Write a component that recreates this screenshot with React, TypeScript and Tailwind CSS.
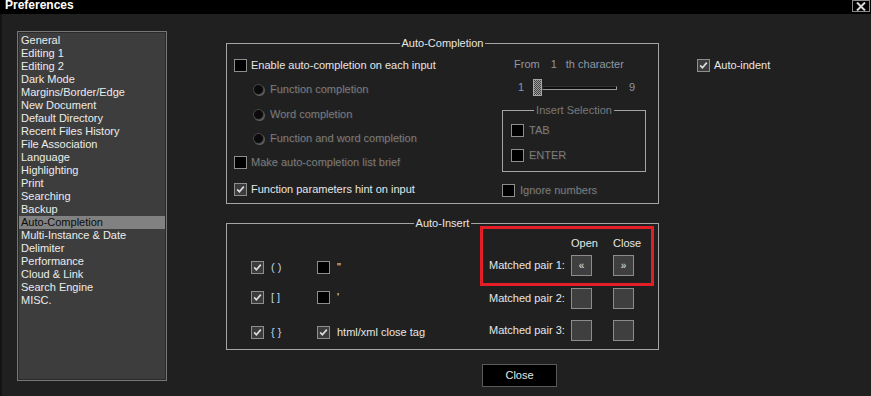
import React from "react";

const lists = [
  "General",
  "Editing 1",
  "Editing 2",
  "Dark Mode",
  "Margins/Border/Edge",
  "New Document",
  "Default Directory",
  "Recent Files History",
  "File Association",
  "Language",
  "Highlighting",
  "Print",
  "Searching",
  "Backup",
  "Auto-Completion",
  "Multi-Instance & Date",
  "Delimiter",
  "Performance",
  "Cloud & Link",
  "Search Engine",
  "MISC.",
];

function Check({ checked = false }: { checked?: boolean }) {
  return (
    <div
      className={`h-[13px] w-[13px] shrink-0 border border-[#8e8e8e] ${
        checked ? "bg-[#3c3c3c]" : "bg-black"
      } flex items-center justify-center`}
    >
      {checked && (
        <svg width="9" height="9" viewBox="0 0 9 9">
          <polyline
            points="1.2,4.4 3.4,6.8 7.8,1.6"
            fill="none"
            stroke="#dcdcdc"
            strokeWidth="1.7"
          />
        </svg>
      )}
    </div>
  );
}

function Radio() {
  return (
    <div className="h-[11px] w-[11px] shrink-0 rounded-full border border-[#4a4a4a] bg-[#0b0b0b] shadow-[1px_1px_0_#5c5c5c]" />
  );
}

function Group({
  title,
  dim = false,
  className,
  children,
}: {
  title: string;
  dim?: boolean;
  className: string;
  children: React.ReactNode;
}) {
  return (
    <div className={`relative border border-[#a4a4a4] ${className}`}>
      <span
        className={`absolute left-1/2 top-[-7px] -translate-x-1/2 whitespace-nowrap bg-[#202020] px-[2px] leading-[13px] ${
          dim ? "text-[#7a7a7a]" : "text-[#e6e6e6]"
        }`}
      >
        {title}
      </span>
      {children}
    </div>
  );
}

const dimText = "text-[#7c7c7c] [text-shadow:1px_1px_0_#2e2e2e]";

function PairButton({ label }: { label?: string }) {
  return (
    <div className="flex h-[21px] w-[21px] items-center justify-center border border-[#8c8c8c] bg-[#3f3f3f] text-[10px] leading-none text-[#e6e6e6]">
      {label}
    </div>
  );
}

export default function App() {
  return (
    <div className="h-[396px] w-[871px] overflow-hidden bg-[#202020] font-['Liberation_Sans',Arial,sans-serif] text-[11px] text-[#e6e6e6]">
      {/* title bar */}
      <div className="flex h-[14px] items-start justify-between bg-black">
        <span className="ml-[5px] mt-[-1px] text-[12px] font-bold leading-[12px] text-white">
          Preferences
        </span>
        <div className="mr-[1px] flex h-[12px] w-[18px] items-center justify-center border border-[#8a8a8a]">
          <svg width="10" height="9" viewBox="0 0 10 9">
            <path d="M1 0.5 L9 8.5 M9 0.5 L1 8.5" stroke="#d8d8d8" strokeWidth="2" />
          </svg>
        </div>
      </div>

      <div className="flex h-[382px] border-l-2 border-[#141414]">
        {/* category list */}
        <div className="ml-[15px] mt-[17px] h-[350px] w-[150px] shrink-0 border border-[#767676] bg-[#2a2a2a] p-[1px]">
          <div className="h-full bg-[#3d3d3d] pt-[1px]">
            {lists.map((item) => (
              <div
                key={item}
                className={`h-[13px] whitespace-nowrap pl-[2px] leading-[13px] ${
                  item === "Auto-Completion" ? "bg-[#818181] text-[#0c0c0c]" : "text-[#ececec]"
                }`}
              >
                {item}
              </div>
            ))}
          </div>
        </div>

        {/* settings */}
        <div className="ml-[59px] mt-[29px] flex shrink-0 flex-col">
          <Group title="Auto-Completion" className="flex h-[161px] w-[433px] pl-[7px]">
            <div className="flex w-[268px] shrink-0 flex-col pt-[15px]">
              <div className="flex h-[13px] items-center gap-[4px]">
                <Check />
                <span>Enable auto-completion on each input</span>
              </div>
              <div className={`ml-[19px] mt-[12px] flex h-[11px] items-center gap-[6px] ${dimText}`}>
                <Radio />
                <span>Function completion</span>
              </div>
              <div className={`ml-[19px] mt-[14px] flex h-[11px] items-center gap-[6px] ${dimText}`}>
                <Radio />
                <span>Word completion</span>
              </div>
              <div className={`ml-[19px] mt-[13px] flex h-[11px] items-center gap-[6px] ${dimText}`}>
                <Radio />
                <span>Function and word completion</span>
              </div>
              <div className="mt-[12px] flex h-[13px] items-center gap-[4px]">
                <Check />
                <span className={dimText}>Make auto-completion list brief</span>
              </div>
              <div className="mt-[14px] flex h-[13px] items-center gap-[4px]">
                <Check checked />
                <span>Function parameters hint on input</span>
              </div>
            </div>

            <div className="flex flex-col pt-[14px]">
              <div className="ml-[12px] flex h-[13px] items-center text-[#8e97a6]">
                <span>From</span>
                <span className="ml-[11px]">1</span>
                <span className="ml-[9px]">th character</span>
              </div>
              <div className="mt-[8px] flex h-[17px] items-center text-[#8e97a6]">
                <span className="ml-[16px] w-[15px]">1</span>
                <div className="h-[17px] w-[9px] border border-[#a8a8a8] bg-[repeating-conic-gradient(#a0a0a0_0_25%,#404040_0_50%)] bg-[length:2px_2px]" />
                <div className="h-[4px] w-[75px] border border-[#9a9a9a] border-l-[#333] border-t-[#333] bg-[#0e0e0e]" />
                <span className="ml-[12px]">9</span>
              </div>
              <Group title="Insert Selection" dim className="mt-[14px] h-[62px] w-[144px] pl-[8px] pt-[13px]">
                <div className="flex h-[13px] items-center gap-[5px]">
                  <Check />
                  <span className={dimText}>TAB</span>
                </div>
                <div className="mt-[12px] flex h-[13px] items-center gap-[5px]">
                  <Check />
                  <span className={dimText}>ENTER</span>
                </div>
              </Group>
              <div className="mt-[12px] flex h-[13px] items-center gap-[5px]">
                <Check />
                <span className={dimText}>Ignore numbers</span>
              </div>
            </div>
          </Group>

          <Group title="Auto-Insert" className="mt-[19px] flex h-[127px] w-[433px]">
            <div className="flex w-[262px] shrink-0 flex-col pl-[24px] pt-[37px]">
              {[
                ["( )", '"', false],
                ["[ ]", "'", false],
                ["{ }", "html/xml close tag", true],
              ].map(([a, b, c], i) => (
                <div
                  key={i}
                  className={`flex h-[13px] items-center ${i === 1 ? "mt-[17px]" : i === 2 ? "mt-[22px]" : ""}`}
                >
                  <div className="flex w-[66px] shrink-0 items-center gap-[7px]">
                    <Check checked />
                    <span className="text-[#b9d6f0]">{a as string}</span>
                  </div>
                  <div className="flex items-center gap-[7px] whitespace-nowrap">
                    <Check checked={c as boolean} />
                    <span>{b as string}</span>
                  </div>
                </div>
              ))}
            </div>

            <div className="relative flex flex-col pt-[13px]">
              <div className="flex h-[13px] items-center leading-[13px]">
                <span className="w-[82px]" />
                <span className="w-[21px] text-center">Open</span>
                <span className="ml-[21px] w-[21px] text-center">Close</span>
              </div>
              {["1", "2", "3"].map((n, i) => (
                <div
                  key={n}
                  className={`flex items-center ${i === 0 ? "mt-[5px]" : i === 1 ? "mt-[12px]" : "mt-[11px]"}`}
                >
                  <span className="w-[82px] whitespace-nowrap">Matched pair {n}:</span>
                  <PairButton label={i === 0 ? "«" : undefined} />
                  <div className="ml-[21px]">
                    <PairButton label={i === 0 ? "»" : undefined} />
                  </div>
                </div>
              ))}
              {/* red annotation */}
              <div className="absolute left-[-9px] top-[2px] h-[60px] w-[174px] border-[3px] border-[#e41e26]" />
            </div>
          </Group>

          <div className="ml-[256px] mt-[14px] flex h-[23px] w-[75px] items-center justify-center border border-[#5a5a5a] bg-black text-[#e6e6e6]">
            Close
          </div>
        </div>

        <div className="ml-[38px] mt-[45px] flex h-[13px] items-center gap-[4px]">
          <Check checked />
          <span>Auto-indent</span>
        </div>
      </div>
    </div>
  );
}
